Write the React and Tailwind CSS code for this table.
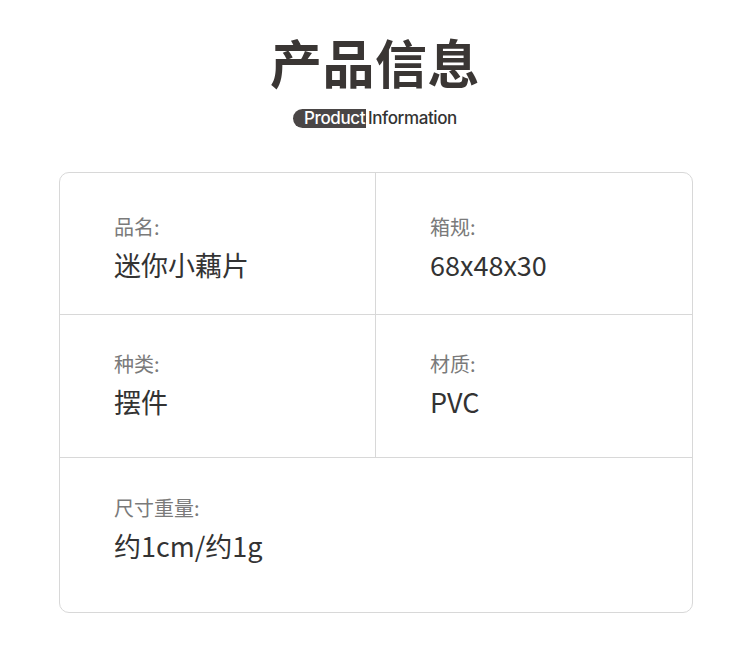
const CJK = "font-['Noto_Sans_CJK_SC','Noto_Sans',sans-serif]";

const Cell = ({ label, value, className = "" }) => (
  <div className={`pl-[54px] ${className}`}>
    <div className="text-[20px] leading-[26px] text-[#7a7a7a]">{label}</div>
    <div className="mt-[7px] text-[27px] leading-[36px] text-[#333333]">{value}</div>
  </div>
);

export default function App() {
  return (
    <div className={`w-[750px] h-[660px] bg-white ${CJK}`}>
      <div className="flex flex-col items-center pt-[27px]">
        <h1 className="text-[52px] leading-[70px] font-semibold text-[#3a3634] tracking-[0.5px]">
          产品信息
        </h1>
        <div className="mt-[12px] flex items-center font-['Inter',sans-serif] text-[17px] font-medium leading-[19px]">
          <span className="bg-[#4a4646] text-white rounded-l-full pl-[11px] pr-[1px] tracking-[-0.4px]">
            Product
          </span>
          <span className="text-[#333333] pl-[2px] tracking-[-0.4px]">Information</span>
        </div>
      </div>

      <div className="ml-[59px] w-[634px] mt-[44px] border border-[#d8d8d8] rounded-[10px] overflow-hidden">
        <div className="grid grid-cols-2 h-[142px] border-b border-[#d8d8d8]">
          <Cell label="品名:" value="迷你小藕片" className="pt-[41px] border-r border-[#d8d8d8]" />
          <Cell label="箱规:" value="68x48x30" className="pt-[41px]" />
        </div>
        <div className="grid grid-cols-2 h-[143px] border-b border-[#d8d8d8]">
          <Cell label="种类:" value="摆件" className="pt-[36px] border-r border-[#d8d8d8]" />
          <Cell label="材质:" value="PVC" className="pt-[36px]" />
        </div>
        <div className="h-[154px] pt-[37px]">
          <Cell label="尺寸重量:" value="约1cm/约1g" />
        </div>
      </div>
    </div>
  );
}
